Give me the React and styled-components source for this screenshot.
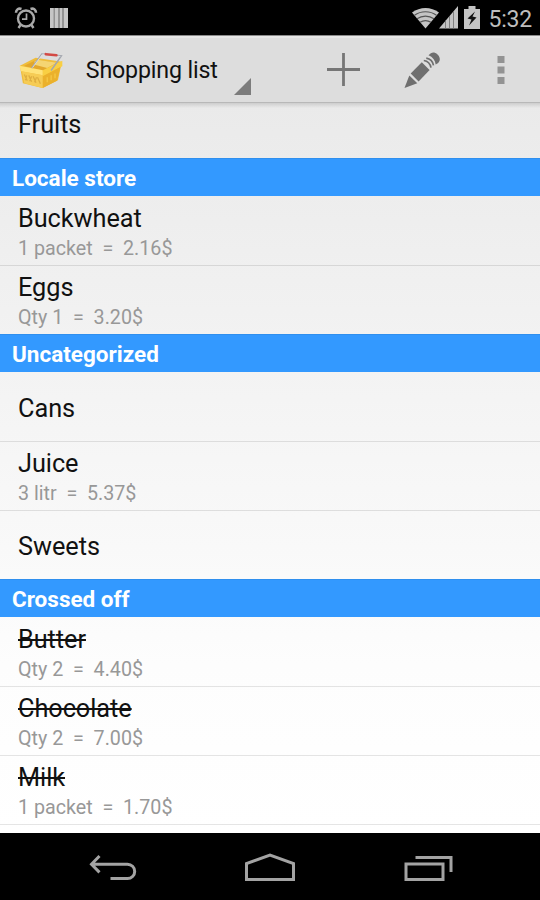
import React from "react"
import styled, { createGlobalStyle } from "styled-components"

const GlobalStyle = createGlobalStyle`
  body {
    margin: 0;
    background: #000;
    font-family: Roboto, "Liberation Sans", sans-serif;
  }
`

const Screen = styled.div`
  display: flex;
  flex-direction: column;
  width: 540px;
  height: 900px;
  overflow: hidden;
`

const StatusBar = styled.div`
  display: flex;
  align-items: center;
  justify-content: space-between;
  flex: none;
  box-sizing: border-box;
  height: 36px;
  padding: 0 8px 0 13px;
  background: #000;
  border-bottom: 1px solid #8a8a8a;
`

const StatusGroup = styled.div`
  display: flex;
  align-items: center;
  gap: ${(props) => props.$gap}px;
`

const Clock = styled.span`
  margin-left: 8px;
  padding-top: 3px;
  font-size: 23px;
  line-height: 33px;
  letter-spacing: -0.2px;
  color: #bebebe;
`

const ActionBar = styled.div`
  display: flex;
  align-items: center;
  flex: none;
  box-sizing: border-box;
  height: 67px;
  padding: 0 0 0 18px;
  background: #ddd;
  border-top: 2px solid #e6e6e6;
  border-bottom: 1px solid #b8b8b8;
`

const Title = styled.div`
  display: flex;
  justify-content: space-between;
  align-items: center;
  width: 166px;
  height: 100%;
  margin-left: 22px;
  font-size: 23.2px;
  letter-spacing: -0.15px;
  color: #111;
`

const Spinner = styled.svg`
  align-self: flex-end;
  margin-bottom: 7px;
`

const Actions = styled.div`
  display: flex;
  align-items: center;
  margin-left: 52px;
`

const Action = styled.div`
  display: flex;
  align-items: center;
  justify-content: center;
  width: 79px;
`

const List = styled.div`
  flex: 1;
  min-height: 0;
  overflow: hidden;
  background:
    linear-gradient(rgba(0, 0, 0, 0.12), transparent) 0 0 / 100% 5px no-repeat,
    linear-gradient(#eaeaea, #fdfdfd 77%, #fff);
`

const Row = styled.div`
  display: flex;
  flex-direction: column;
  justify-content: center;
  box-sizing: border-box;
  height: 69px;
  padding: ${(props) => (props.$double ? "5px" : "3px")} 18px 0;
  margin-top: ${(props) => (props.$scrolled ? "-15px" : "0")};
  margin-bottom: ${(props) => (props.$scrolled ? "1px" : "0")};
  box-shadow: ${(props) => (props.$last ? "none" : "0 1px 0 rgba(0, 0, 0, 0.1)")};
`

const Name = styled.div`
  font-size: 25.3px;
  line-height: 31px;
  letter-spacing: -0.05px;
  color: #111;
  text-decoration: ${(props) => (props.$crossed ? "line-through" : "none")};
  text-decoration-thickness: 2px;
`

const Details = styled.div`
  font-size: 19.7px;
  line-height: 29px;
  color: #989898;
  white-space: pre;
`

const Category = styled.div`
  box-sizing: border-box;
  height: 38px;
  padding-left: 12px;
  font-size: 22.5px;
  line-height: 39px;
  font-weight: bold;
  color: #fff;
  background: #3399ff;
  border-top: 1px solid #2f8fee;
`

const NavBar = styled.div`
  display: flex;
  align-items: center;
  justify-content: space-around;
  flex: none;
  box-sizing: border-box;
  height: 67px;
  padding: 2px 34px 0;
  background: #000;
`

const AlarmIcon = () => (
  <svg width="26" height="24" viewBox="0 0 26 24" fill="none" stroke="#a9a9a9">
    <circle cx="13" cy="12.5" r="8" strokeWidth="2.4" />
    <path d="M13.5 7.5v5.7H9" strokeWidth="1.7" />
    <path d="M3 6.8C3 3.5 5.5 2 8.5 3M23 6.8C23 3.5 20.5 2 17.5 3" strokeWidth="2.6" />
    <path d="M7.5 19l-2 3M18.5 19l2 3" strokeWidth="2.4" />
  </svg>
)

const BarsIcon = () => (
  <svg width="18" height="22" viewBox="0 0 18 22">
    <path d="M0 1h18v20H0z" fill="#929292" />
    <path d="M0 1h3.5v20H0zM5 1h3v20H5zM10 1h2v20h-2zM14 1h4v20h-4z" fill="#c6c6c6" />
  </svg>
)

const WifiIcon = () => (
  <svg width="27" height="22" viewBox="0 0 27 22">
    <path d="M0 5.5C8 -.6 19 -.6 27 5.5L13.5 21.5z" fill="#c4c4c4" />
    <path
      d="M2.5 8.2C9 3.6 18 3.6 24.5 8.2M5 11.7c5-3.5 12-3.5 17 0M8 15.3c3.5-2.2 7.5-2.2 11 0"
      fill="none"
      stroke="#555"
      strokeWidth="1.2"
    />
  </svg>
)

const SignalIcon = () => (
  <svg width="19" height="23" viewBox="0 0 19 23">
    <path d="M0 22.5L19 0v22.5z" fill="#c4c4c4" />
    <path d="M6.5 14.5v8M10.5 10v12.5M14.5 5v17.5" stroke="#777" strokeWidth="0.9" />
  </svg>
)

const Battery = styled.svg`
  margin-left: 6px;
`

const BatteryIcon = () => (
  <Battery width="16" height="23" viewBox="0 0 16 23">
    <path d="M4.5 0h7v3H16v20H0V3h4.500z" fill="#c4c4c4" />
    <path d="M11 5.500L3.500 12.500 7.500 13.500 5 19.500 12.500 11.500 8.500 10.500z" fill="#111" />
  </Battery>
)

const BasketIcon = () => (
  <svg width="46" height="39" viewBox="0 0 47 40">
    <path d="M2 15L18 7l27 4-4 19-16 8-20-5z" fill="#f0bd3a" />
    <path d="M6 15.5L19 9l21 3-14 8z" fill="#e3a72c" />
    <path d="M17 10.5L20 9l20 3-10 5.5-13-3.5z" fill="#f5d573" />
    <path d="M1.5 15l24 4.7V25L3 20.8z" fill="#ffe37a" />
    <path d="M4 20.8l21.5 4.2V38L6.5 33z" fill="#f6cc55" />
    <path d="M25.5 19.7L45.5 10v5.7L25.5 26z" fill="#f9cf43" />
    <path d="M25.5 26L43.5 16.5 40 30.5 25.5 38z" fill="#ebb12c" />
    <path
      d="M6.5 24l3 6.5M11 25l3 6.5M15.5 26l3 6.5M20 27l3 6.5M9 25l-1.5 5M14 26l-2 5M19 27l-2 5"
      stroke="#dfae40"
      strokeWidth="1.3"
    />
    <path d="M30 27v5M34 25v5M38 23v5" stroke="#f7cb48" strokeWidth="1.2" />
    <path d="M14 17.5L24.5 3 44.500 5 34 20" fill="none" stroke="#a3a6ae" strokeWidth="1.5" />
    <path d="M15 17L25 3.500l18.500 2" fill="none" stroke="#e9edf3" strokeWidth="0.7" />
    <path d="M28.5 3.200l11 1.200" stroke="#d34a45" strokeWidth="2.6" strokeLinecap="round" />
  </svg>
)

const PlusIcon = () => (
  <svg width="34" height="34" viewBox="0 0 34 34" stroke="#767676" strokeWidth="2.8">
    <path d="M17.5 0v33M1 16.500h33" />
  </svg>
)

const PencilIcon = () => (
  <svg width="38" height="38" viewBox="0 0 38 38" fill="#6f6f6f">
    <path d="M1.5 37L6.3 24.5l8 7.7z" />
    <path d="M7.7 22.5L18.8 11.3l7.8 7.7-11 11.5z" />
    <path
      d="M20.8 9.5c3.500.5 6.500 3.500 7.200 7.200M23.300 7.200c3.500.6 6.500 3.600 7.200 7.200"
      fill="none"
      stroke="#6f6f6f"
      strokeWidth="1.7"
    />
    <path d="M25.5 4.3c2.500-3 5.500-4 8.500-1.300s4 6 1.200 9l-2.500 1.500c-.5-4-3-7.500-7.200-9.200z" />
  </svg>
)

const OverflowIcon = () => (
  <svg width="8" height="30" viewBox="0 0 8 30" fill="#939393">
    <path d="M.5 1h7v7h-7zM.5 11.5h7v7h-7zM.5 22h7v7h-7z" />
  </svg>
)

const NavIcon = styled.svg`
  width: 52px;
  height: 34px;
  fill: none;
  stroke: #a3a3a3;
  stroke-width: 3;
`

const items = [
  { name: "Fruits", scrolled: true, last: true },
  { category: "Locale store" },
  { name: "Buckwheat", details: "1 packet  =  2.16$" },
  { name: "Eggs", details: "Qty 1  =  3.20$", last: true },
  { category: "Uncategorized" },
  { name: "Cans" },
  { name: "Juice", details: "3 litr  =  5.37$" },
  { name: "Sweets", last: true },
  { category: "Crossed off" },
  { name: "Butter", details: "Qty 2  =  4.40$", crossed: true },
  { name: "Chocolate", details: "Qty 2  =  7.00$", crossed: true },
  { name: "Milk", details: "1 packet  =  1.70$", crossed: true },
]

const App = () => {
  return (
    <Screen>
      <GlobalStyle />
      <StatusBar>
        <StatusGroup $gap={11}>
          <AlarmIcon />
          <BarsIcon />
        </StatusGroup>
        <StatusGroup $gap={0}>
          <WifiIcon />
          <SignalIcon />
          <BatteryIcon />
          <Clock>5:32</Clock>
        </StatusGroup>
      </StatusBar>
      <ActionBar>
        <BasketIcon />
        <Title>
          Shopping list
          <Spinner width="17" height="17" viewBox="0 0 17 17">
            <path d="M17 0v17H0z" fill="#7c7c7c" />
          </Spinner>
        </Title>
        <Actions>
          <Action>
            <PlusIcon />
          </Action>
          <Action>
            <PencilIcon />
          </Action>
          <Action>
            <OverflowIcon />
          </Action>
        </Actions>
      </ActionBar>
      <List>
        {items.map((item) =>
          item.category ? (
            <Category key={item.category}>{item.category}</Category>
          ) : (
            <Row
              key={item.name}
              $double={Boolean(item.details)}
              $scrolled={item.scrolled}
              $last={item.last}
            >
              <Name $crossed={item.crossed}>{item.name}</Name>
              {item.details && <Details>{item.details}</Details>}
            </Row>
          )
        )}
      </List>
      <NavBar>
        <NavIcon viewBox="0 0 52 34">
          <path d="M12.5 5L4.5 13.2l8 8.2M5 13.2h35.500a7.200 7.200 0 0 1 0 14.400H23.500" />
        </NavIcon>
        <NavIcon viewBox="0 0 52 34">
          <path d="M2.5 28.5V12.5L26 4l23.5 8.5v16z" />
        </NavIcon>
        <NavIcon viewBox="0 0 52 34">
          <path d="M5 13h37v15.500H5zM14.500 6.500H50V21" />
        </NavIcon>
      </NavBar>
    </Screen>
  )
}

export default App
